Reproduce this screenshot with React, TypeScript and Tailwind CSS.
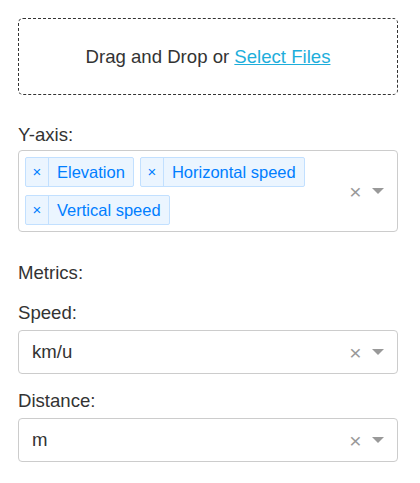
import React from 'react';

function Controls() {
  return (
    <div className="flex items-center pr-[13px] text-[#999]">
      <span className="w-[17px] text-center text-[21px] leading-none">×</span>
      <svg className="ml-[8px]" width="12" height="6" viewBox="0 0 12 6">
        <path d="M0 0 L12 0 L6 6 Z" fill="#999" />
      </svg>
    </div>
  );
}

function Tag({ label }: { label: string }) {
  return (
    <div className="flex h-[30px] items-stretch rounded-[2px] border border-[#c2e0ff] bg-[#ebf5ff] text-[16.5px] text-[#007eff]">
      <span className="flex w-[23px] items-center justify-center border-r border-[#c2e0ff] text-[15px]">×</span>
      <span className="flex items-center px-[8px]">{label}</span>
    </div>
  );
}

function SingleSelect({ value }: { value: string }) {
  return (
    <div className="mt-[5px] flex h-[44px] items-center rounded-[4px] border border-[#ccc] bg-white">
      <div className="flex-1 pl-[13px]">{value}</div>
      <Controls />
    </div>
  );
}

export default function App() {
  const yAxis = ['Elevation', 'Horizontal speed', 'Vertical speed'];

  return (
    <div className="min-h-[483px] bg-white px-[18px] pt-[18px] font-['Liberation_Sans',Arial,sans-serif] text-[18.6px] leading-6 text-[#333]">
      <div className="flex h-[77px] w-[380px] items-center justify-center rounded-[5px] border border-dashed border-[#333]">
        <span>
          Drag and Drop or <a className="cursor-pointer text-[#1EAEDB] underline">Select Files</a>
        </span>
      </div>

      <div className="w-[380px]">
        <div className="mt-[28px]">Y-axis:</div>
        <div className="mt-[3px] flex min-h-[82px] rounded-[4px] border border-[#ccc] bg-white">
          <div className="flex flex-1 flex-wrap content-start gap-x-[6px] gap-y-[8px] py-[6px] pl-[6px]">
            {yAxis.map((y) => (
              <Tag key={y} label={y} />
            ))}
          </div>
          <Controls />
        </div>

        <div className="mt-[28px] pt-[1px]">Metrics:</div>

        <div className="mt-[16px]">Speed:</div>
        <SingleSelect value="km/u" />

        <div className="mt-[15px]">Distance:</div>
        <SingleSelect value="m" />
      </div>
    </div>
  );
}
